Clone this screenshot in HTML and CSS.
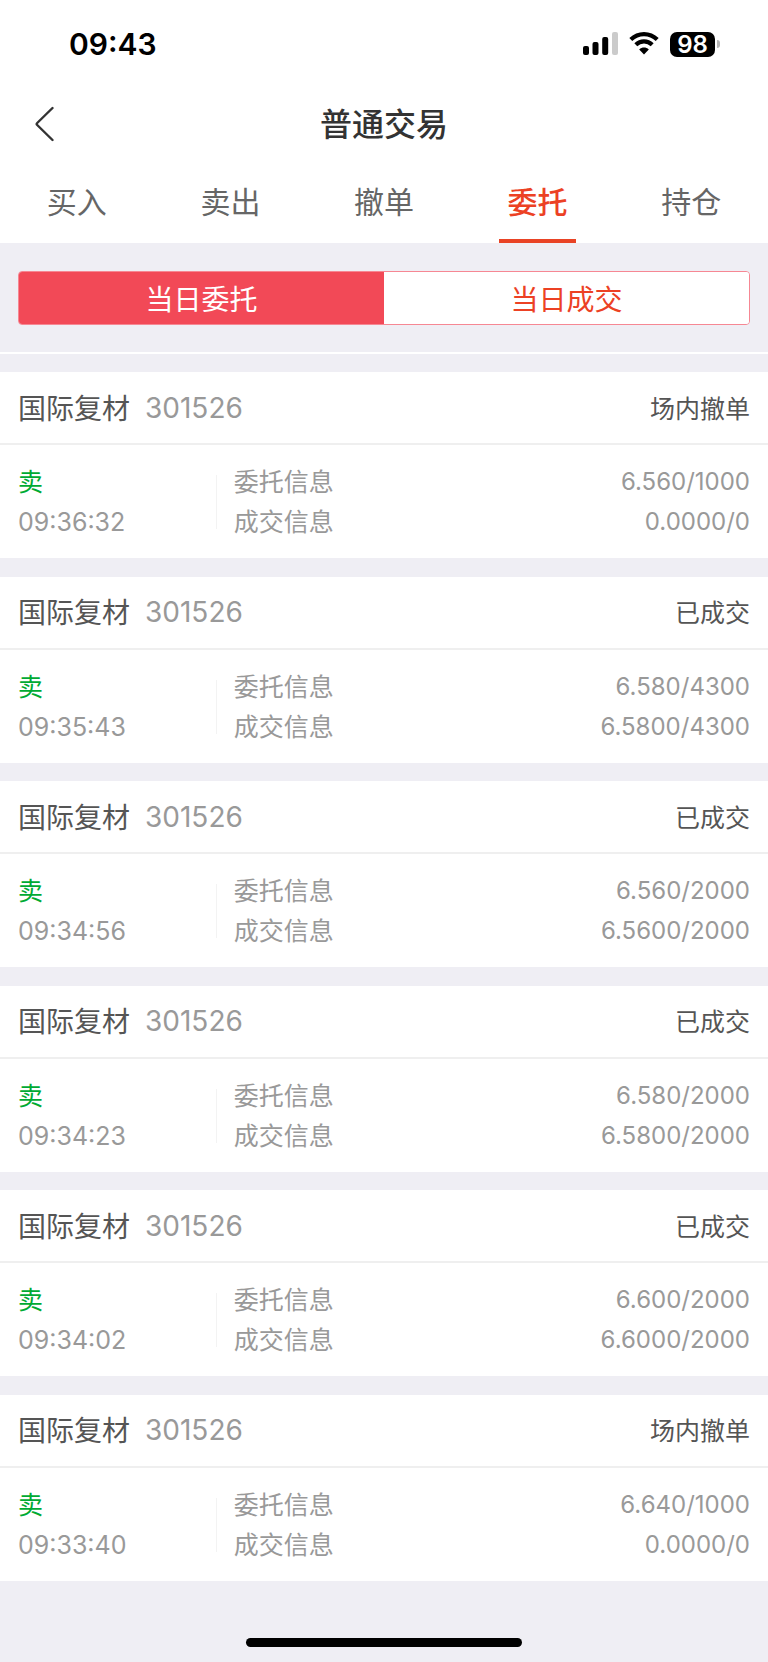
FILE: index.html
```html
<!DOCTYPE html>
<html lang="zh-CN">
<head>
    <meta charset="UTF-8">
    <meta name="viewport" content="width=device-width, initial-scale=1.0">
    <title>普通交易</title>
    <link rel="stylesheet" href="styles.css">
</head>
<body>
    <header class="top">
        <div class="status-bar">
            <span class="clock">09:43</span>
            <div class="status-icons">
                <svg class="signal" width="36" height="26" viewBox="0 0 36 26">
                    <rect x="0" y="15" width="6" height="9" rx="2"/>
                    <rect x="9.5" y="11" width="6" height="13" rx="2"/>
                    <rect x="19.2" y="6" width="6" height="18" rx="2"/>
                    <rect x="29" y="1" width="6" height="23" rx="2" fill="#cbcbcb"/>
                </svg>
                <svg class="wifi" width="30" height="26" viewBox="0 0 30 26">
                    <path d="M1.8 8.6C9.3 1.3 20.7 1.3 28.2 8.6" fill="none" stroke="#000" stroke-width="4.2"/>
                    <path d="M6.8 13.8C11.5 9.3 18.5 9.3 23.2 13.8" fill="none" stroke="#000" stroke-width="4.2"/>
                    <path d="M10.2 18.4C13 15.8 17 15.8 19.8 18.4L15 23.6Z"/>
                </svg>
                <div class="battery">
                    <span class="battery-level">98</span>
                    <span class="battery-tip"></span>
                </div>
            </div>
        </div>
        <div class="title-bar">
            <button class="back" type="button" aria-label="返回">
                <svg width="20" height="36" viewBox="0 0 20 36">
                    <path d="M17.5 2L2.2 17Q1.2 18 2.2 19L17.5 34" fill="none" stroke="#333" stroke-width="2.4" stroke-linecap="round"/>
                </svg>
            </button>
            <h1>普通交易</h1>
        </div>
        <nav class="tabs">
            <a href="#">买入</a>
            <a href="#">卖出</a>
            <a href="#">撤单</a>
            <a href="#" class="active">委托</a>
            <a href="#">持仓</a>
        </nav>
    </header>

    <div class="switch-wrap">
        <div class="switch">
            <button type="button" class="selected">当日委托</button>
            <button type="button">当日成交</button>
        </div>
    </div>

    <main class="orders">
        <article class="order">
            <div class="order-head">
                <h2>国际复材</h2>
                <span class="code">301526</span>
                <span class="state">场内撤单</span>
            </div>
            <div class="order-body">
                <div class="side">
                    <span class="sell">卖</span>
                    <time>09:36:32</time>
                </div>
                <dl class="info">
                    <dt>委托信息</dt><dd>6.560/1000</dd>
                    <dt>成交信息</dt><dd>0.0000/0</dd>
                </dl>
            </div>
        </article>

        <article class="order">
            <div class="order-head">
                <h2>国际复材</h2>
                <span class="code">301526</span>
                <span class="state">已成交</span>
            </div>
            <div class="order-body">
                <div class="side">
                    <span class="sell">卖</span>
                    <time>09:35:43</time>
                </div>
                <dl class="info">
                    <dt>委托信息</dt><dd>6.580/4300</dd>
                    <dt>成交信息</dt><dd>6.5800/4300</dd>
                </dl>
            </div>
        </article>

        <article class="order">
            <div class="order-head">
                <h2>国际复材</h2>
                <span class="code">301526</span>
                <span class="state">已成交</span>
            </div>
            <div class="order-body">
                <div class="side">
                    <span class="sell">卖</span>
                    <time>09:34:56</time>
                </div>
                <dl class="info">
                    <dt>委托信息</dt><dd>6.560/2000</dd>
                    <dt>成交信息</dt><dd>6.5600/2000</dd>
                </dl>
            </div>
        </article>

        <article class="order">
            <div class="order-head">
                <h2>国际复材</h2>
                <span class="code">301526</span>
                <span class="state">已成交</span>
            </div>
            <div class="order-body">
                <div class="side">
                    <span class="sell">卖</span>
                    <time>09:34:23</time>
                </div>
                <dl class="info">
                    <dt>委托信息</dt><dd>6.580/2000</dd>
                    <dt>成交信息</dt><dd>6.5800/2000</dd>
                </dl>
            </div>
        </article>

        <article class="order">
            <div class="order-head">
                <h2>国际复材</h2>
                <span class="code">301526</span>
                <span class="state">已成交</span>
            </div>
            <div class="order-body">
                <div class="side">
                    <span class="sell">卖</span>
                    <time>09:34:02</time>
                </div>
                <dl class="info">
                    <dt>委托信息</dt><dd>6.600/2000</dd>
                    <dt>成交信息</dt><dd>6.6000/2000</dd>
                </dl>
            </div>
        </article>

        <article class="order">
            <div class="order-head">
                <h2>国际复材</h2>
                <span class="code">301526</span>
                <span class="state">场内撤单</span>
            </div>
            <div class="order-body">
                <div class="side">
                    <span class="sell">卖</span>
                    <time>09:33:40</time>
                </div>
                <dl class="info">
                    <dt>委托信息</dt><dd>6.640/1000</dd>
                    <dt>成交信息</dt><dd>0.0000/0</dd>
                </dl>
            </div>
        </article>
    </main>

    <footer class="home">
        <div class="home-bar"></div>
    </footer>
</body>
</html>
```
FILE: styles.css
```css
* {
    box-sizing: border-box;
}
body {
    margin: 0;
    min-height: 100vh;
    display: flex;
    flex-direction: column;
    background-color: #efeef4;
    color: #999;
    font-family: Inter, "Noto Sans CJK SC", sans-serif;
    font-size: 25px;
}
h1, h2, dl, dd {
    margin: 0;
    font-weight: normal;
}
button {
    font-family: inherit;
    border: none;
    padding: 0;
    cursor: pointer;
}
.top {
    background-color: #fff;
}

/* status bar */
.status-bar {
    display: flex;
    justify-content: space-between;
    align-items: center;
    height: 88px;
    padding: 0 48px 0 69px;
}
.clock {
    color: #000;
    font-size: 30px;
    font-weight: 600;
}
.status-icons {
    display: flex;
    align-items: center;
}
.wifi {
    margin: 0 11px 0 10px;
}
.battery {
    display: flex;
    align-items: center;
    gap: 2px;
}
.battery-level {
    width: 45px;
    height: 25px;
    border-radius: 7px;
    background-color: #000;
    color: #fff;
    font-size: 24px;
    font-weight: 600;
    line-height: 25px;
    text-align: center;
}
.battery-tip {
    width: 3px;
    height: 8px;
    border-radius: 0 3px 3px 0;
    background-color: #b5b5b5;
}

/* title */
.title-bar {
    display: grid;
    grid-template-columns: 1fr auto 1fr;
    align-items: center;
    height: 72px;
    padding: 0 35px;
}
.title-bar h1 {
    padding-bottom: 4px;
    color: #333;
    font-size: 32px;
    font-weight: 500;
}
.back {
    display: flex;
    justify-self: start;
    background: none;
}

/* tabs */
.tabs {
    display: grid;
    grid-template-columns: repeat(5, 1fr);
    height: 83px;
}
.tabs a {
    display: flex;
    flex-direction: column;
    align-items: center;
    justify-content: space-between;
    padding-top: 6px;
    color: #666;
    font-size: 30px;
    line-height: 73px;
    text-decoration: none;
}
.tabs .active {
    color: #ec4124;
    font-weight: 500;
}
.tabs .active::after {
    content: "";
    width: 50%;
    height: 4px;
    background-color: #e94325;
}

/* switch */
.switch-wrap {
    padding: 28px 18px 27px;
    border-bottom: 2px solid #fff;
}
.switch {
    display: flex;
    height: 54px;
    border: 1px solid #f68793;
    border-radius: 4px;
    overflow: hidden;
}
.switch button {
    flex: 1;
    background-color: #fff;
    color: #ec4124;
    font-size: 28px;
}
.switch .selected {
    background-color: #f24957;
    color: #fff;
}

/* orders */
.orders {
    flex: 1;
    display: flex;
    flex-direction: column;
    justify-content: space-between;
    gap: 18px;
    padding-top: 18px;
}
.order {
    background-color: #fff;
}
.order-head {
    display: flex;
    align-items: center;
    height: 73px;
    padding: 0 18px;
    border-bottom: 2px solid #efefef;
}
.order-head h2 {
    padding-bottom: 2px;
    color: #555;
    font-size: 28px;
}
.code {
    margin-left: 15px;
    font-size: 28px;
}
.state {
    margin-left: auto;
    padding-bottom: 2px;
    color: #555;
}
.order-body {
    display: flex;
    align-items: center;
    padding: 17px 18px 16px;
    line-height: 40px;
}
.side {
    display: flex;
    flex-direction: column;
    width: 27%;
}
.sell {
    color: #0a3;
}
.info {
    flex: 1;
    display: grid;
    grid-template-columns: auto 1fr;
    background: linear-gradient(#f3f3f3, #f3f3f3) left center / 1px 54px no-repeat;
    padding-left: 18px;
}
.info dd {
    font-size: 24px;
    text-align: right;
}

/* home indicator */
.home {
    display: flex;
    justify-content: center;
    align-items: flex-end;
    height: 81px;
    padding-bottom: 15px;
}
.home-bar {
    width: 36%;
    height: 9px;
    border-radius: 5px;
    background-color: #000;
}
```
